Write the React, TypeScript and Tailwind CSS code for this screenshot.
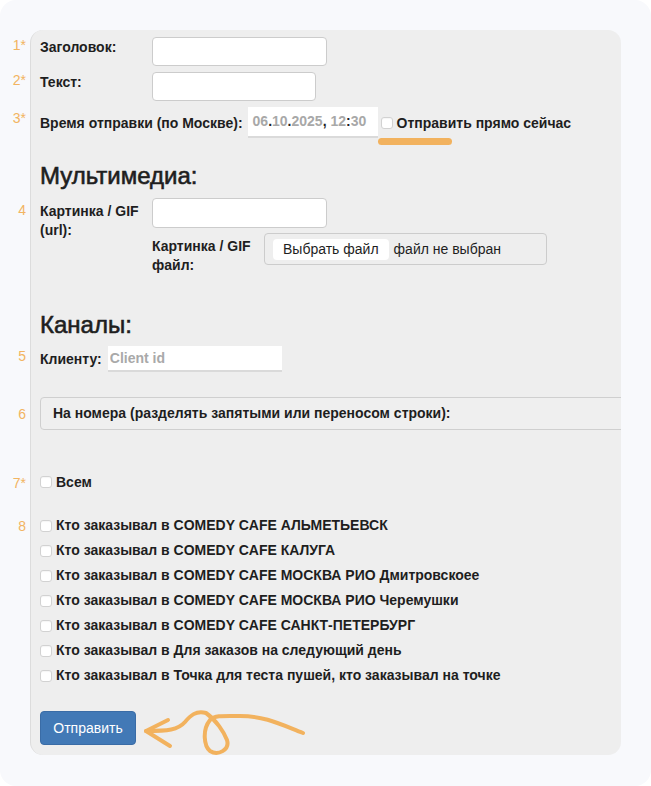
import React from "react"

const orange = "text-[#f2b461]"

function Note({ children, top }: { children: React.ReactNode; top: string }) {
  return (
    <span className={`absolute left-[-40px] w-[26px] text-right text-[14px] leading-[18px] font-normal ${orange} ${top}`}>
      {children}
    </span>
  )
}

function Check() {
  return (
    <input
      type="checkbox"
      className="appearance-none w-[12px] h-[12px] shrink-0 rounded-[3px] border border-[#d2d2d2] bg-white shadow-[inset_0_1px_1px_rgba(0,0,0,0.04)]"
    />
  )
}

const channels = [
  "Кто заказывал в COMEDY CAFE АЛЬМЕТЬЕВСК",
  "Кто заказывал в COMEDY CAFE КАЛУГА",
  "Кто заказывал в COMEDY CAFE МОСКВА РИО Дмитровскоее",
  "Кто заказывал в COMEDY CAFE МОСКВА РИО Черемушки",
  "Кто заказывал в COMEDY CAFE САНКТ-ПЕТЕРБУРГ",
  "Кто заказывал в Для заказов на следующий день",
  "Кто заказывал в Точка для теста пушей, кто заказывал на точке",
]

export default function App() {
  const input = "bg-white border border-[#cccccc] rounded-[4px] outline-none"
  return (
    <div className="min-h-screen bg-white font-['Liberation_Sans',Arial,sans-serif] text-[14px] font-bold text-[#1e1e1e]">
      <div className="h-[786px] rounded-[16px] bg-[#f8f9fc] px-[30px] pt-[30px]">
        <div className="rounded-[13px] bg-[#eeeeee] border-l border-[#dcdcdc] pl-[9px] pt-[7px] pb-[10px]">
          {/* заголовок */}
          <div className="relative flex items-start">
            <Note top="top-[-1px]">1*</Note>
            <label className="w-[112px] pt-[1px] leading-[18px]">Заголовок:</label>
            <input className={`w-[175px] h-[29px] ${input}`} />
          </div>

          <div className="relative flex items-start mt-[6px]">
            <Note top="top-[-1px]">2*</Note>
            <label className="w-[112px] pt-[1px] leading-[18px]">Текст:</label>
            <input className={`w-[164px] h-[29px] ${input}`} />
          </div>

          <div className="relative flex items-center mt-[6px]">
            <Note top="top-[2px]">3*</Note>
            <label className="leading-[18px]">Время отправки (по Москве):</label>
            <div className="ml-[5px] w-[130px] h-[31px] bg-white border-b-2 border-[#dadada] flex items-center pl-[5px]">
              <span className="text-[#a8a8a8]">06</span>
              <span>.</span>
              <span className="text-[#a8a8a8]">10</span>
              <span>.</span>
              <span className="text-[#a8a8a8]">2025</span>
              <span>,&nbsp;</span>
              <span className="text-[#a8a8a8]">12</span>
              <span>:</span>
              <span className="text-[#a8a8a8]">30</span>
            </div>
            <div className="relative flex items-center ml-[3px]">
              <Check />
              <span className="ml-[4px] leading-[18px]">Отправить прямо сейчас</span>
              <span className="absolute left-[-3px] top-[24px] w-[74px] h-[7px] rounded-full bg-[#f2b25e]" />
            </div>
          </div>

          <h2 className="mt-[24px] text-[24px] leading-[28px] font-normal [-webkit-text-stroke:0.6px_#1e1e1e]">Мультимедиа:</h2>

          <div className="relative flex items-start mt-[8px] h-[30px]">
            <Note top="top-[3px]">4</Note>
            <label className="w-[112px] pt-[4px] leading-[19px]">
              Картинка / GIF
              <br />
              (url):
            </label>
            <input className={`w-[175px] h-[30px] ${input}`} />
          </div>

          <div className="flex items-start mt-[5px] ml-[112px]">
            <label className="w-[112px] pt-[4px] leading-[19px]">
              Картинка / GIF
              <br />
              файл:
            </label>
            <div className="w-[283px] h-[32px] border border-[#cccccc] rounded-[4px] flex items-center pl-[8px] font-normal">
              <span className="h-[21px] px-[10px] bg-white rounded-[4px] leading-[21px]">Выбрать файл</span>
              <span className="ml-[5px]">файл не выбран</span>
            </div>
          </div>

          <h2 className="mt-[36px] text-[24px] leading-[28px] font-normal [-webkit-text-stroke:0.6px_#1e1e1e]">Каналы:</h2>

          <div className="relative flex items-center mt-[7px]">
            <Note top="top-[1px]">5</Note>
            <label className="leading-[18px]">Клиенту:</label>
            <input
              placeholder="Client id"
              className="ml-[6px] w-[174px] h-[26px] bg-white border-b-2 border-[#dadada] px-[2px] font-bold outline-none placeholder:text-[#a9a9a9]"
            />
          </div>

          <div className="relative mt-[25px]">
            <Note top="top-[8px]">6</Note>
            <div className="overflow-hidden">
              <div className="w-[640px] h-[33px] border border-[#cfcfcf] rounded-[4px] bg-[#efefef] flex items-center pl-[12px]">
                На номера (разделять запятыми или переносом строки):
              </div>
            </div>
          </div>

          <div className="relative flex items-center mt-[43px] h-[18px]">
            <Note top="top-[1px]">7*</Note>
            <Check />
            <span className="ml-[4px]">Всем</span>
          </div>

          <div className="relative mt-[22px]">
            <Note top="top-[4px]">8</Note>
            {channels.map((c) => (
              <div key={c} className="flex items-center h-[25px]">
                <Check />
                <span className="ml-[4px]">{c}</span>
              </div>
            ))}
          </div>

          <div className="relative mt-[23px]">
            <button className="w-[96px] h-[34px] rounded-[4px] bg-[#4279b6] border border-[#3a6ca6] text-white font-normal text-[14px]">
              Отправить
            </button>
            <svg
              className="absolute left-[100px] top-[-5px]"
              width="170"
              height="55"
              viewBox="0 0 170 55"
              fill="none"
              stroke="#f2b25e"
              strokeWidth="4"
              strokeLinecap="round"
              strokeLinejoin="round"
            >
              <path d="M163,27 C140,18 125,10 100,10 C85,10 75,9 70,14 C62,24 64,40 70,45 C78,50 90,44 87,34 C84,26 76,14 66,7 C56,4 50,10 45,16 C38,24 28,25 6,25" />
              <path d="M28,14 L6,25 L30,40" />
            </svg>
          </div>
        </div>
      </div>
    </div>
  )
}
